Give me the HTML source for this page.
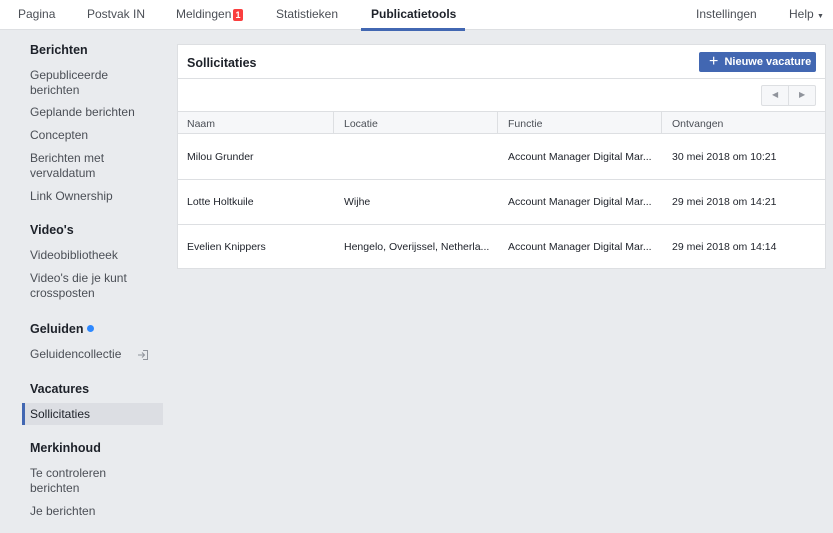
<!DOCTYPE html>
<html><head><meta charset="utf-8"><style>
*{margin:0;padding:0;box-sizing:border-box}
body{width:833px;height:533px;background:#e9ebee;font-family:"Liberation Sans",Helvetica,Arial,sans-serif;color:#1d2129;position:relative;overflow:hidden}
.a{position:absolute;white-space:nowrap}
#top{position:absolute;left:0;top:0;width:833px;height:30px;background:#fff;border-bottom:1px solid #dddfe2}
.t{position:absolute;top:7px;font-size:12px;color:#4b4f56}
.s{font-size:12px;color:#4b4f56;line-height:15px}
.h{font-size:12.5px;font-weight:bold;color:#1d2129}
#card{position:absolute;left:177px;top:44px;width:649px;height:225px;background:#fff;border:1px solid #dddfe2}
.row{position:absolute;left:0;width:647px;border-top:1px solid #dddfe2}
.c{position:absolute;font-size:10.5px;color:#1d2129;white-space:nowrap}
</style></head><body>
<div id="top">
<span class="t" style="left:18px">Pagina</span>
<span class="t" style="left:87px">Postvak IN</span>
<span class="t" style="left:176px">Meldingen</span>
<span class="a" style="left:233px;top:9px;width:10px;height:12px;background:#fa3e3e;color:#fff;font-size:9px;font-weight:bold;text-align:center;line-height:12px;border-radius:2px">1</span>
<span class="t" style="left:276px">Statistieken</span>
<span class="t" style="left:371px;font-weight:bold;color:#1d2129">Publicatietools</span>
<div class="a" style="left:361px;top:28px;width:104px;height:3px;background:#4267b2"></div>
<span class="t" style="left:696px">Instellingen</span>
<span class="t" style="left:789px">Help <span style="font-size:7px">▼</span></span>
</div>

<div class="a h" style="left:30px;top:43px">Berichten</div>
<div class="a s" style="left:30px;top:68px">Gepubliceerde<br>berichten</div>
<div class="a s" style="left:30px;top:105px">Geplande berichten</div>
<div class="a s" style="left:30px;top:128px">Concepten</div>
<div class="a s" style="left:30px;top:151px">Berichten met<br>vervaldatum</div>
<div class="a s" style="left:30px;top:189px">Link Ownership</div>
<div class="a h" style="left:30px;top:223px">Video's</div>
<div class="a s" style="left:30px;top:248px">Videobibliotheek</div>
<div class="a s" style="left:30px;top:271px">Video's die je kunt<br>crossposten</div>
<div class="a h" style="left:30px;top:322px">Geluiden <span style="display:inline-block;width:7px;height:7px;border-radius:50%;background:#2d88ff;vertical-align:1px"></span></div>
<div class="a s" style="left:30px;top:347px">Geluidencollectie</div>
<svg class="a" style="left:137px;top:349px" width="12" height="12" viewBox="0 0 12 12"><path d="M6 1.5h4.5v9H6M1 6h6.5M5 3.5L7.5 6 5 8.5" fill="none" stroke="#90949c" stroke-width="1"/></svg>
<div class="a h" style="left:30px;top:382px">Vacatures</div>
<div class="a" style="left:22px;top:403px;width:141px;height:22px;background:#dcdee3;border-left:3px solid #4267b2"></div>
<div class="a s" style="left:30px;top:407px;color:#1d2129">Sollicitaties</div>
<div class="a h" style="left:30px;top:441px">Merkinhoud</div>
<div class="a s" style="left:30px;top:466px">Te controleren<br>berichten</div>
<div class="a s" style="left:30px;top:504px">Je berichten</div>

<div id="card">
<div class="a" style="left:9px;top:11px;font-size:12.5px;font-weight:bold">Sollicitaties</div>
<div class="a" style="left:521px;top:7px;width:117px;height:20px;background:#4267b2;border-radius:2px;color:#fff;font-size:11px;font-weight:bold;line-height:20px;padding-left:10px"><span style="font-size:16px;font-weight:normal;vertical-align:-1px">+</span>&nbsp; Nieuwe vacature</div>
<div class="row" style="top:33px"></div>
<div class="a" style="left:583px;top:40px;width:55px;height:21px;border:1px solid #dddfe2;background:#f6f7f9;border-radius:2px">
<div class="a" style="left:26px;top:0;width:1px;height:19px;background:#dddfe2"></div>
<span class="a" style="left:10px;top:4px;font-size:8px;color:#90949c">◀</span>
<span class="a" style="left:37px;top:4px;font-size:8px;color:#90949c">▶</span></div>
<div class="row" style="top:66px;height:23px;background:#f6f7f9;border-bottom:1px solid #dddfe2"></div>
<div class="a" style="left:155px;top:67px;width:1px;height:22px;background:#dddfe2"></div>
<div class="a" style="left:319px;top:67px;width:1px;height:22px;background:#dddfe2"></div>
<div class="a" style="left:483px;top:67px;width:1px;height:22px;background:#dddfe2"></div>
<span class="c" style="left:9px;top:73px;color:#4b4f56">Naam</span>
<span class="c" style="left:166px;top:73px;color:#4b4f56">Locatie</span>
<span class="c" style="left:330px;top:73px;color:#4b4f56">Functie</span>
<span class="c" style="left:494px;top:73px;color:#4b4f56">Ontvangen</span>
<span class="c" style="left:9px;top:106px">Milou Grunder</span>
<span class="c" style="left:330px;top:106px">Account Manager Digital Mar...</span>
<span class="c" style="left:494px;top:106px">30 mei 2018 om 10:21</span>
<div class="row" style="top:134px"></div>
<span class="c" style="left:9px;top:151px">Lotte Holtkuile</span>
<span class="c" style="left:166px;top:151px">Wijhe</span>
<span class="c" style="left:330px;top:151px">Account Manager Digital Mar...</span>
<span class="c" style="left:494px;top:151px">29 mei 2018 om 14:21</span>
<div class="row" style="top:179px"></div>
<span class="c" style="left:9px;top:196px">Evelien Knippers</span>
<span class="c" style="left:166px;top:196px">Hengelo, Overijssel, Netherla...</span>
<span class="c" style="left:330px;top:196px">Account Manager Digital Mar...</span>
<span class="c" style="left:494px;top:196px">29 mei 2018 om 14:14</span>
</div>
</body></html>
